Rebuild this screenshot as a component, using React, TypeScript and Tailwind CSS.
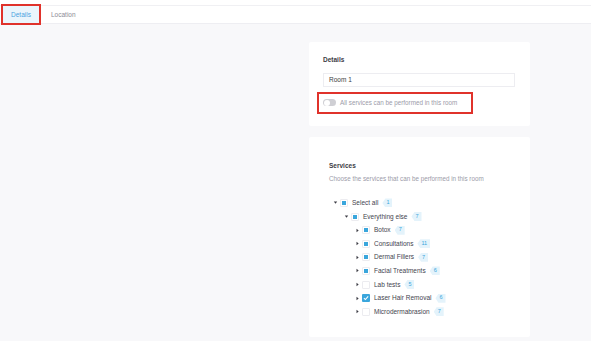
import { useState } from "react";

type Service = {
  name: string;
  count: number;
  state: "partial" | "checked" | "empty";
};

const services: Service[] = [
  { name: "Botox", count: 7, state: "partial" },
  { name: "Consultations", count: 11, state: "partial" },
  { name: "Dermal Fillers", count: 7, state: "partial" },
  { name: "Facial Treatments", count: 6, state: "partial" },
  { name: "Lab tests", count: 5, state: "empty" },
  { name: "Laser Hair Removal", count: 6, state: "checked" },
  { name: "Microdermabrasion", count: 7, state: "empty" },
];

function Caret({ open }: { open?: boolean }) {
  return (
    <svg
      width="5"
      height="5"
      viewBox="0 0 6 6"
      className="shrink-0 text-[#3c3c44]"
    >
      {open ? (
        <path d="M1 1.8 L5 1.8 L3 4.4 Z" fill="currentColor" />
      ) : (
        <path d="M1.8 1 L4.4 3 L1.8 5 Z" fill="currentColor" />
      )}
    </svg>
  );
}

function Box({ state }: { state: Service["state"] }) {
  if (state === "checked") {
    return (
      <span className="flex h-[8px] w-[8px] shrink-0 items-center justify-center rounded-[1px] bg-[#3aa6dc]">
        <svg width="6" height="6" viewBox="0 0 10 10">
          <path
            d="M1.5 5.2 L4 7.6 L8.6 2.4"
            fill="none"
            stroke="white"
            strokeWidth="1.8"
          />
        </svg>
      </span>
    );
  }
  return (
    <span className="flex h-[8px] w-[8px] shrink-0 items-center justify-center rounded-[1px] border border-[#ececf0] bg-white">
      {state === "partial" && <span className="h-[4px] w-[4px] bg-[#3aa6dc]" />}
    </span>
  );
}

function Badge({ n }: { n: number }) {
  return (
    <span className="ml-[4px] flex h-[9px] items-center bg-[#e4f3fb] pl-[4px] pr-[3px] text-[5.5px] font-medium leading-none text-[#3aa6dc] [clip-path:polygon(3px_0,100%_0,100%_100%,3px_100%,0_50%)]">
      {n}
    </span>
  );
}

function Row({
  indent,
  open,
  state,
  label,
  count,
}: {
  indent: string;
  open?: boolean;
  state: Service["state"];
  label: string;
  count: number;
}) {
  return (
    <div className={`flex h-[13.6px] items-center ${indent}`}>
      <Caret open={open} />
      <span className="ml-[2px]">
        <Box state={state} />
      </span>
      <span className="ml-[4px] text-[6.5px] text-[#44444f]">{label}</span>
      <Badge n={count} />
    </div>
  );
}

export default function App() {
  const [allServices, setAllServices] = useState(false);

  return (
    <div
      className="flex h-[341px] w-full flex-col overflow-hidden bg-[#f8f8fa]"
      style={{ fontFamily: '"Liberation Sans", Arial, sans-serif' }}
    >
      {/* top bar */}
      <div className="h-[6px] border-b border-[#f0f0f3] bg-white" />

      {/* tabs */}
      <div className="flex h-[18px] items-stretch border-b border-[#eeeef2] bg-white pl-[3px]">
        <button className="relative flex w-[36px] items-center justify-center bg-[#eaf5fc] text-[6.5px] font-medium text-[#4aa3df] outline-2 outline-[#e0322b]">
          Details
        </button>
        <button className="ml-[11px] flex items-center px-[1px] text-[6.5px] text-[#8b8b96]">
          Location
        </button>
      </div>

      {/* content */}
      <div className="flex flex-col gap-[11px] pl-[309px] pt-[18px]">
        {/* details card */}
        <div className="flex h-[84px] w-[221px] flex-col rounded-[2px] bg-white px-[14px] pt-[13px]">
          <h3 className="text-[6.5px] font-semibold text-[#3c3c44]">Details</h3>
          <div className="mt-[8px] flex h-[14px] w-[192px] items-center border border-[#ededf1] px-[5px] text-[6.5px] text-[#3c3c44]">
            Room 1
          </div>
          <div className="-ml-[6px] mt-[5px] flex h-[22px] w-[156px] items-center gap-[4px] border-2 border-[#e0322b] px-[4px]">
            <button
              onClick={() => setAllServices(!allServices)}
              className={`relative h-[7px] w-[13px] rounded-full ${
                allServices ? "bg-[#3aa6dc]" : "bg-[#cfcfd4]"
              }`}
            >
              <span
                className={`absolute top-[0.5px] h-[6px] w-[6px] rounded-full bg-white ${
                  allServices ? "right-[0.5px]" : "left-[0.5px]"
                }`}
              />
            </button>
            <span className="text-[6.3px] font-medium text-[#9b9ba8]">
              All services can be performed in this room
            </span>
          </div>
        </div>

        {/* services card */}
        <div className="flex h-[200px] w-[221px] flex-col rounded-[2px] bg-white pl-[20px] pt-[24px]">
          <h3 className="text-[6.5px] font-semibold text-[#3c3c44]">Services</h3>
          <p className="mt-[3px] text-[6.3px] text-[#9b9ba8]">
            Choose the services that can be performed in this room
          </p>
          <div className="mt-[13px] flex flex-col">
            <Row indent="pl-[4px]" open state="partial" label="Select all" count={1} />
            <Row indent="pl-[15px]" open state="partial" label="Everything else" count={7} />
            {services.map((s) => (
              <Row
                key={s.name}
                indent="pl-[26px]"
                state={s.state}
                label={s.name}
                count={s.count}
              />
            ))}
          </div>
        </div>
      </div>
    </div>
  );
}
